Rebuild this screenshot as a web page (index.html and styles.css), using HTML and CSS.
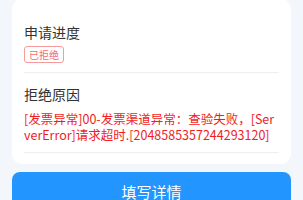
FILE: index.html
```html
<!DOCTYPE html>
<html lang="zh-CN">
<head>
    <meta charset="UTF-8">
    <meta name="viewport" content="width=device-width, initial-scale=1.0">
    <title>申请进度</title>
    <link rel="stylesheet" href="styles.css">
</head>
<body>
    <div class="page">
        <div class="card">
            <div class="row">
                <div class="label">申请进度</div>
                <span class="tag">已拒绝</span>
            </div>
            <div class="row">
                <div class="label">拒绝原因</div>
                <div class="reason">[发票异常]00-发票渠道异常：查验失败，[ServerError]请求超时.[2048585357244293120]</div>
            </div>
        </div>
        <button class="btn" type="button">填写详情</button>
    </div>
</body>
</html>
```

FILE: styles.css
```css
/* General Styles */
body {
    margin: 0;
    padding: 0;
    background-color: #f3f7fb;
    font-family: 'Noto Sans CJK SC', 'Noto Sans', sans-serif;
    overflow: hidden;
}

.page {
    padding: 0 12px;
}

.card {
    margin-top: -1px;
    background-color: #fff;
    border-radius: 10px;
    padding: 12px 12px 11px;
}

.row {
    display: flex;
    flex-direction: column;
    align-items: flex-start;
    padding: 11px 0 9px;
    border-bottom: 1px solid #eeeeee;
}

.label {
    font-size: 14px;
    line-height: 20px;
    color: #333;
}

.tag {
    display: block;
    margin-top: 4px;
    height: 15px;
    line-height: 15px;
    padding: 0 4px;
    font-size: 10px;
    color: #f56c6c;
    border: 1px solid #f89a9a;
    border-radius: 3px;
}

.reason {
    margin-top: 7px;
    font-size: 12.5px;
    line-height: 16px;
    color: #f01d1d;
    word-break: break-all;
}

.btn {
    display: block;
    width: 100%;
    height: 40px;
    margin-top: 8px;
    border: none;
    border-radius: 8px;
    background-color: #2395ff;
    color: #fff;
    font-family: inherit;
    font-size: 15px;
    line-height: 40px;
    padding: 0;
    cursor: pointer;
}
```
